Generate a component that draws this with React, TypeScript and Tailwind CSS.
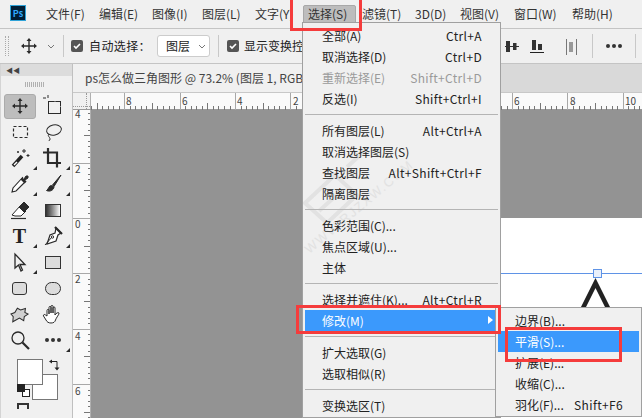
import React from "react";

const font = { fontFamily: '"Noto Sans CJK SC", "Noto Sans", sans-serif' };

const menus: [string, number][] = [
  ["文件(F)", 53],
  ["编辑(E)", 53],
  ["图像(I)", 50],
  ["图层(L)", 53],
  ["文字(Y)", 53],
  ["选择(S)", 54],
  ["滤镜(T)", 53],
  ["3D(D)", 45],
  ["视图(V)", 54],
  ["窗口(W)", 58],
  ["帮助(H)", 50],
];

type Row = { label?: string; key?: string; disabled?: boolean; active?: boolean; arrow?: boolean };

const selectMenu: Row[] = [
  { label: "全部(A)", key: "Ctrl+A" },
  { label: "取消选择(D)", key: "Ctrl+D" },
  { label: "重新选择(E)", key: "Shift+Ctrl+D", disabled: true },
  { label: "反选(I)", key: "Shift+Ctrl+I" },
  {},
  { label: "所有图层(L)", key: "Alt+Ctrl+A" },
  { label: "取消选择图层(S)" },
  { label: "查找图层", key: "Alt+Shift+Ctrl+F" },
  { label: "隔离图层" },
  {},
  { label: "色彩范围(C)..." },
  { label: "焦点区域(U)..." },
  { label: "主体" },
  {},
  { label: "选择并遮住(K)...", key: "Alt+Ctrl+R" },
  { label: "修改(M)", active: true, arrow: true },
  {},
  { label: "扩大选取(G)" },
  { label: "选取相似(R)" },
  {},
  { label: "变换选区(T)" },
];

const modifyMenu: Row[] = [
  { label: "边界(B)..." },
  { label: "平滑(S)...", active: true },
  { label: "扩展(E)..." },
  { label: "收缩(C)..." },
  { label: "羽化(F)...", key: "Shift+F6" },
];

function MenuRow({ row }: { row: Row }) {
  if (!row.label) {
    return (
      <div className="h-[11px] flex items-center">
        <div className="h-px w-full bg-[#b4b4b4]" />
      </div>
    );
  }
  return (
    <div
      className={`relative h-[21px] flex items-center justify-between pl-[17px] pr-[16px] text-[12px] whitespace-nowrap ${
        row.active ? "bg-[#3b99fc] text-white" : row.disabled ? "text-[#9a9a9a]" : "text-[#222]"
      }`}
    >
      <span>{row.label}</span>
      {row.key && <span className="tracking-[0.35px]">{row.key}</span>}
      {row.arrow && (
        <span className="absolute right-[5px] top-[6px] w-0 h-0 border-y-[4px] border-y-transparent border-l-[5px] border-l-white" />
      )}
    </div>
  );
}

function Icon({ children, w = 22, h = 22 }: { children: React.ReactNode; w?: number; h?: number }) {
  return (
    <svg width={w} height={h} viewBox={`0 0 ${w} ${h}`} fill="none" stroke="#2a2a2a" strokeWidth="1">
      {children}
    </svg>
  );
}

function MoveIcon() {
  return (
    <Icon w={16} h={16}>
      <path d="M8 2v12M2 8h12" strokeWidth="1.4" />
      <path d="M8 0l2.5 3h-5zM8 16l2.5-3h-5zM0 8l3-2.5v5zM16 8l-3-2.5v5z" fill="#2a2a2a" stroke="none" />
    </Icon>
  );
}

function Corner() {
  return <span className="absolute right-[-1px] bottom-[1px] w-0 h-0 border-l-[4px] border-l-transparent border-b-[4px] border-b-[#2a2a2a]" />;
}

const tools: { node: React.ReactNode; corner?: boolean; selected?: boolean }[] = [
  { node: <MoveIcon />, selected: true },
  {
    node: (
      <Icon>
        <rect x="6.500" y="6.500" width="12" height="12" />
        <path d="M1 3h3M6 0v3" />
        <path d="M13 6.500l5.500 5.500" stroke="#f0f0f0" />
      </Icon>
    ),
  },
  {
    node: (
      <Icon>
        <rect x="4.500" y="5.500" width="14" height="11" strokeDasharray="3 2" strokeWidth="1.200" />
      </Icon>
    ),
  },
  {
    node: (
      <Icon>
        <ellipse cx="12" cy="9" rx="7.500" ry="5" transform="rotate(-12 12 9)" />
        <path d="M7 13c-2 2 1 3 1 5s-1 1-1.500 2" />
      </Icon>
    ),
  },
  {
    node: (
      <Icon>
        <path d="M4 19L13 9" stroke="#222" strokeWidth="3.500" />
        <path d="M5 18l3-3" stroke="#fff" strokeWidth="1.500" />
        <path d="M15 2v4M13 4h4M19 7v3M17.500 8.500h3M9 4v2M8 5h2" strokeWidth="1" />
      </Icon>
    ),
    corner: true,
  },
  {
    node: (
      <Icon>
        <path d="M6 1v15h13M1 5.500h14v15" strokeWidth="2.200" />
      </Icon>
    ),
    corner: true,
  },
  {
    node: (
      <Icon>
        <path d="M14 4L4 15l-1 4 4-1L17 8" fill="#fff" strokeWidth="1.100" />
        <path d="M12.500 5.500l4 4" strokeWidth="2.600" />
        <path d="M15 6l2-3 2 0 0 2-3 2z" fill="#2a2a2a" />
      </Icon>
    ),
    corner: true,
  },
  {
    node: (
      <Icon>
        <path d="M19 2L10.500 12l1.500 1.500z" fill="#2a2a2a" />
        <path d="M9.500 12.500c-3 0-2.500 3.500-5 5 3 1.500 7 0 7.500-3.500z" fill="#2a2a2a" />
      </Icon>
    ),
    corner: true,
  },
  {
    node: (
      <Icon>
        <path d="M3 16l8-9 6 5-5 5H6z" fill="#fff" />
        <path d="M10 8l5-5 5 5-5 5z" fill="#2a2a2a" />
        <path d="M2 19.500h15" strokeWidth="1.200" />
      </Icon>
    ),
  },
  {
    node: (
      <div className="w-[14px] h-[11px] border border-[#333] bg-gradient-to-r from-[#333] to-white box-content" />
    ),
  },
  {
    node: (
      <span className="text-[20px] leading-none font-bold text-[#222]" style={{ fontFamily: '"Liberation Serif", serif' }}>
        T
      </span>
    ),
    corner: true,
  },
  {
    node: (
      <Icon>
        <path d="M14 3l5 5-3 2-2 6-9 3 3-9 5-2z" strokeWidth="1.200" fill="#fff" />
        <path d="M3 20l7-8" />
        <path d="M13 2l7 7" strokeWidth="2.200" />
        <circle cx="10.500" cy="12" r="1.200" />
      </Icon>
    ),
    corner: true,
  },
  {
    node: (
      <Icon>
        <path d="M6 3v14l3.500-3 2.500 6 1.500-1-2.500-5.500H16z" strokeWidth="1.300" fill="#f0f0f0" />
      </Icon>
    ),
    corner: true,
  },
  {
    node: <div className="w-[14px] h-[11px] border border-[#333] bg-[#dcdcdc] box-content" />,
  },
  {
    node: <div className="w-[13px] h-[11px] border border-[#333] bg-[#dcdcdc] rounded-[3px] box-content" />,
  },
  {
    node: <div className="w-[14px] h-[11px] border border-[#333] bg-[#dcdcdc] rounded-full box-content" />,
  },
  {
    node: (
      <Icon>
        <path d="M3 18l1-5-2-3 4-1 3-4 3 2 5-1-1 4 3 2-4 2-1 4-4-3z" fill="#d0d0d0" transform="rotate(-6 11 11)" />
      </Icon>
    ),
  },
  {
    node: (
      <Icon>
        <path d="M5 13V7.500c0-1.500 2-1.500 2 0V11V4.500c0-1.500 2-1.500 2 0V10V3.500c0-1.500 2-1.500 2 0V10V5c0-1.500 2-1.500 2 0V12c1-2 3.500-3 4-2s-3 5-3.500 7-2 3-4.500 3-4-1-5-3l-2.500-4c-.5-1.500 1-2 2-1z" fill="#fff" strokeWidth="1" />
      </Icon>
    ),
  },
  {
    node: (
      <Icon>
        <circle cx="9" cy="9" r="6" strokeWidth="1.300" />
        <path d="M13.500 13.500L20 20" strokeWidth="2.200" />
      </Icon>
    ),
  },
  {
    node: (
      <div className="flex gap-[2px]">
        <span className="w-[4px] h-[4px] rounded-full bg-[#333]" />
        <span className="w-[4px] h-[4px] rounded-full bg-[#333]" />
        <span className="w-[4px] h-[4px] rounded-full bg-[#333]" />
      </div>
    ),
    corner: true,
  },
];

function TopRuler() {
  // one big tick every ten small ones
  const small = Array.from({ length: 100 }, (_, i) => i * 5.54);
  const labels = [
    ["8", 35],
    ["6", 91],
    ["4", 146],
    ["2", 202],
    ["6", 423],
    ["8", 479],
    ["10", 534],
  ] as [string, number][];
  return (
    <svg width="551" height="17" className="block" style={font}>
      {small.map((s, i) => {
        const x = Math.round(s) + 0.5;
        const h = i % 10 === 6 ? 17 : i % 5 === 1 ? 7 : 4;
        return <line key={i} x1={x} x2={x} y1={17 - h} y2={17} stroke={h === 17 ? "#a8a8a8" : "#777"} />;
      })}
      {labels.map(([t, x], i) => (
        <text key={i} x={x} y={12} fontSize="10" fill="#444">
          {t}
        </text>
      ))}
    </svg>
  );
}

function LeftRuler() {
  const labels = [
    ["4", 8],
    ["2", 63],
    ["0", 118],
    ["2", 173],
    ["4", 230],
    ["6", 285],
  ] as [string, number][];
  const small = Array.from({ length: 60 }, (_, i) => 3 + i * 5.53);
  return (
    <svg width="18" height="308" className="block" style={font}>
      {small.map((s, i) => {
        const y = Math.round(s) + 0.5;
        const w = i % 10 === 9 ? 18 : i % 10 === 4 ? 7 : 3;
        return <line key={i} x1={18 - w} x2={18} y1={y} y2={y} stroke={w === 18 ? "#a8a8a8" : "#777"} />;
      })}
      {labels.map(([t, y], i) => (
        <text key={i} x={2} y={y} fontSize="10" fill="#444">
          {t}
        </text>
      ))}
    </svg>
  );
}

export default function App() {
  return (
    <div className="relative w-[642px] h-[418px] overflow-hidden bg-[#f0f0f0] text-[#222]" style={font}>
      {/* menu bar */}
      <div className="h-[29px] flex items-center pl-[10px] border-b border-[#c4c4c4] bg-[#f0f0f0]">
        <div className="w-[16px] h-[16px] mb-[2px] border border-[#2fa3d8] bg-[#001e36] flex items-center justify-center text-[9px] font-bold leading-none text-[#31a8ff]">
          Ps
        </div>
        <div className="flex ml-[20px] text-[12px] text-[#333]">
          {menus.map(([m, w]) => (
            <span key={m} style={{ width: w }} className="whitespace-nowrap">
              {m}
            </span>
          ))}
        </div>
      </div>

      {/* options bar */}
      <div className="h-[35px] flex items-center border-b border-[#c4c4c4] text-[12px] text-[#222]">
        <div className="w-[4px] h-[20px] ml-[5px] border-x border-dotted border-[#aaa]" />
        <div className="ml-[12px]">
          <MoveIcon />
        </div>
        <svg width="8" height="5" className="ml-[10px]" fill="none" stroke="#777">
          <path d="M1 1l3 3 3-3" />
        </svg>
        <div className="w-px h-[22px] ml-[8px] bg-[#c8c8c8]" />
        <div className="w-[12px] h-[12px] ml-[7px] rounded-[2px] bg-[#555] flex items-center justify-center">
          <svg width="8" height="8" fill="none" stroke="#fff" strokeWidth="1.600">
            <path d="M1 4l2 2 4-4" />
          </svg>
        </div>
        <span className="ml-[6px] w-[68px] whitespace-nowrap tracking-[0.4px]">自动选择：</span>
        <div className="w-[53px] h-[22px] flex items-center bg-white border border-[#ccc] rounded-[3px] pl-[8px]">
          <span className="w-[32px]">图层</span>
          <svg width="8" height="5" fill="none" stroke="#777">
            <path d="M1 1l3 3 3-3" />
          </svg>
        </div>
        <div className="w-px h-[22px] ml-[8px] bg-[#c8c8c8]" />
        <div className="w-[12px] h-[12px] ml-[8px] rounded-[2px] bg-[#555] flex items-center justify-center">
          <svg width="8" height="8" fill="none" stroke="#fff" strokeWidth="1.600">
            <path d="M1 4l2 2 4-4" />
          </svg>
        </div>
        <span className="ml-[5px] whitespace-nowrap">显示变换控件</span>
        <div className="ml-auto flex items-center pr-[6px]">
          <svg width="72" height="20" fill="#333">
            <rect x="0" y="10" width="14" height="1" />
            <rect x="1" y="5" width="4" height="11" />
            <rect x="8" y="7" width="3.500" height="7" />
            <rect x="25" y="16" width="14" height="1" fill="#222" />
            <rect x="27" y="4" width="4" height="10" />
            <rect x="33" y="8" width="4" height="6" />
            <rect x="61" y="3" width="1" height="16" fill="#777" />
            <rect x="64" y="6" width="4" height="10" fill="#999" />
            <rect x="71" y="3" width="1" height="16" fill="#777" />
          </svg>
          <div className="w-px h-[24px] ml-[15px] bg-[#c8c8c8]" />
          <div className="flex gap-[2px] ml-[13px]">
            <span className="w-[4px] h-[4px] rounded-full bg-[#333]" />
            <span className="w-[4px] h-[4px] rounded-full bg-[#333]" />
            <span className="w-[4px] h-[4px] rounded-full bg-[#333]" />
          </div>
          <div className="w-px h-[24px] ml-[13px] bg-[#c8c8c8]" />
        </div>
      </div>

      {/* work area */}
      <div className="flex h-[354px]">
        <div className="w-[73px] shrink-0 border-x border-l-[#d4d4d4] border-r-[#c0c0c0]">
          <div className="h-[12px] bg-[#dcdcdc] flex items-center pl-[5px] text-[7px] leading-none text-[#444]">◀◀</div>
          <div className="h-[17px] flex justify-center items-center">
            <div className="w-[19px] h-[5px] mr-[4px] bg-[repeating-linear-gradient(90deg,#b0b0b0_0,#b0b0b0_1px,transparent_1px,transparent_2px)]" />
          </div>
          <div className="grid grid-cols-[33px_33px] auto-rows-[26px] pl-[2px]">
            {tools.map((t, i) => (
              <div key={i} className="flex items-center justify-center">
                <div
                  className={`relative w-[32px] h-[25px] flex items-center justify-center ${
                    t.selected ? "bg-[#bdbdbd] border border-[#ababab] rounded-[3px]" : ""
                  }`}
                >
                  {t.node}
                  {t.corner && <Corner />}
                </div>
              </div>
            ))}
          </div>
          {/* colour swatches */}
          <div className="relative h-[50px]">
            <div className="absolute left-[31px] top-[21px] w-[26px] h-[26px] bg-white border border-[#777]" />
            <div className="absolute left-[16px] top-[6px] w-[26px] h-[26px] bg-white border border-[#777]" />
            <svg width="12" height="12" className="absolute left-[48px] top-[6px]" fill="none" stroke="#222">
              <path d="M1 2.500h7v7" />
              <path d="M0 2.500l3-2v4zM8 11.500l-2.500-3h5z" fill="#222" stroke="none" />
            </svg>
            <div className="absolute left-[21px] top-[36px] w-[8px] h-[8px] bg-white border border-[#222]" />
            <div className="absolute left-[16px] top-[31px] w-[8px] h-[8px] bg-[#222]" />
          </div>
          <div className="w-[12px] h-[6px] ml-[16px] border-2 border-b-0 border-[#333]" />
        </div>

        <div className="flex-1 flex flex-col min-w-0">
          <div className="h-[29px] shrink-0 bg-[#d9d9d9] border-b border-[#c8c8c8]">
            <div className="h-full w-[300px] bg-[#f0f0f0] pl-[12px] flex items-center text-[12px] text-[#444] whitespace-nowrap overflow-hidden">
              ps怎么做三角图形 @ 73.2% (图层 1, RGB/8#)
            </div>
          </div>
          <div className="h-[17px] shrink-0 flex bg-[#fafafa] border-b border-[#999]">
            <div className="relative w-[18px] shrink-0 bg-[#f0f0f0] border-r border-[#b0b0b0]">
              <div className="absolute left-[13px] top-0 h-full border-l border-dotted border-[#999]" />
              <div className="absolute left-0 top-[13px] w-full border-t border-dotted border-[#999]" />
            </div>
            <TopRuler />
          </div>
          <div className="flex-1 flex min-h-0">
            <div className="w-[18px] shrink-0 bg-[#fafafa] border-r border-[#b0b0b0] overflow-hidden">
              <LeftRuler />
            </div>
            <div className="relative flex-1 bg-[#939393]">
              <div className="absolute left-[250px] right-0 top-[108px] bottom-0 bg-white" />
              <div className="absolute left-[250px] right-0 top-[163px] h-px bg-[#5f93e6]" />
              <div className="absolute left-[502px] top-[159px] w-[9px] h-[9px] bg-[#eaf0fa] border border-[#5f93e6]" />
              <svg width="40" height="34" className="absolute left-[484px] top-[167px]" fill="none" stroke="#222" strokeWidth="4.500">
                <path d="M7 33L20.500 6 34 33" />
              </svg>
            </div>
          </div>
        </div>
      </div>

      {/* active top-level menu item */}
      <div className="absolute left-[303px] top-[5px] w-[53px] h-[18px] bg-[#bdbdbd] border border-[#a8a8a8] rounded-t-[2px] text-[12px] text-[#333] leading-[16px] pl-[4px]">
        选择(S)
      </div>

      {/* select menu */}
      <div className="absolute left-[302px] top-[22px] w-[199px] h-[396px] bg-[#f0f0f0] border border-[#a0a0a0] px-[2px] pt-[2px] overflow-hidden">
        <svg width="90" height="110" className="absolute left-[-6px] top-[118px]" fill="none" stroke="#e2e2e2" strokeWidth="4">
          <path d="M8 62L38 34l22 20-30 28z" />
          <path d="M22 70l20-18" />
          <path d="M50 26l20-18" />
        </svg>
        <div className="absolute left-[-14px] top-[170px] w-[150px] rotate-[-40deg] text-[13px] tracking-[1.500px] text-[#e2e2e2] whitespace-nowrap" style={{ fontFamily: '"Liberation Sans", sans-serif' }}>
          WWW.RJZXW.COM
        </div>
        <div className="relative">
          {selectMenu.map((r, i) => (
            <MenuRow key={i} row={r} />
          ))}
        </div>
      </div>

      {/* modify submenu */}
      <div className="absolute left-[495px] top-[307px] w-[147px] h-[110px] bg-[#f0f0f0] border border-[#a0a0a0] px-[2px] pt-[2px]">
        {modifyMenu.map((r, i) => (
          <MenuRow key={i} row={r} />
        ))}
      </div>

      {/* red annotation boxes */}
      <div className="absolute left-[290px] top-[-4px] w-[72px] h-[35px] border-[3px] border-[#f53c3c]" />
      <div className="absolute left-[296px] top-[305px] w-[205px] h-[29px] border-[3px] border-[#f53c3c]" />
      <div className="absolute left-[505px] top-[327px] w-[117px] h-[35px] border-[3px] border-[#f53c3c]" />
    </div>
  );
}
